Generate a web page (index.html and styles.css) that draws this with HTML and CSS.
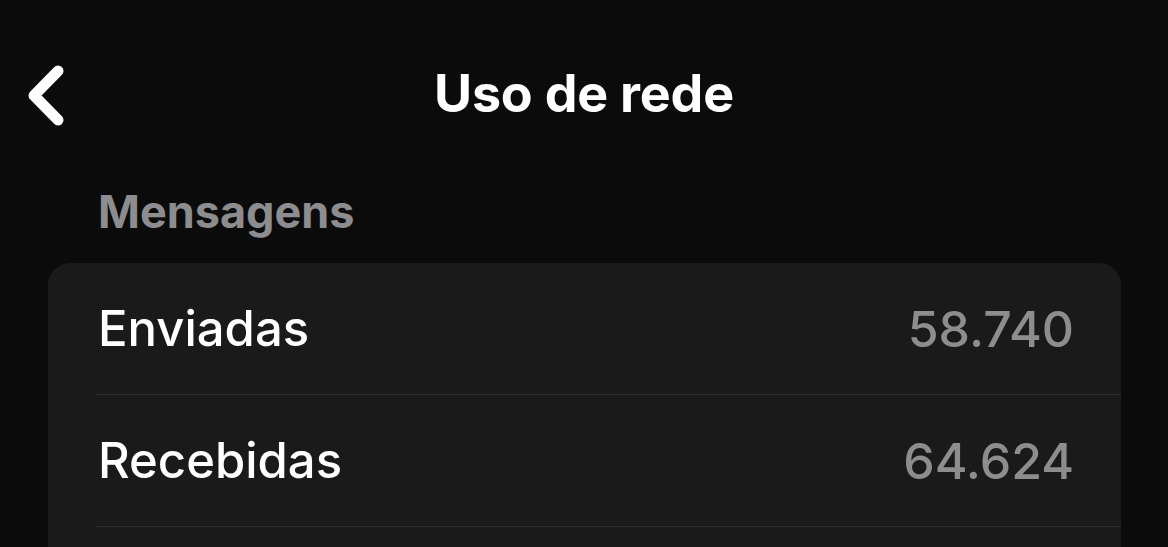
FILE: index.html
```html
<!DOCTYPE html>
<html lang="pt">
<head>
<meta charset="utf-8">
<title>Uso de rede</title>
<link rel="stylesheet" href="styles.css">
</head>
<body>
<div class="screen">
  <header class="nav">
    <div class="nav-left">
      <svg class="back" width="40" height="64" viewBox="0 0 40 64" aria-label="Voltar">
        <polyline points="31,7 7,31.5 31,56" fill="none" stroke="#ffffff" stroke-width="11" stroke-linecap="round" stroke-linejoin="round"/>
      </svg>
    </div>
    <h1 class="title">Uso de rede</h1>
    <div class="nav-right"></div>
  </header>
  <h2 class="section-label">Mensagens</h2>
  <section class="card">
    <div class="row">
      <div class="row-inner">
        <span class="row-label">Enviadas</span>
        <span class="row-value">58.740</span>
      </div>
    </div>
    <div class="row">
      <div class="row-inner">
        <span class="row-label">Recebidas</span>
        <span class="row-value">64.624</span>
      </div>
    </div>
  </section>
</div>
</body>
</html>
```
FILE: styles.css
```css
html, body {
  margin: 0;
  padding: 0;
  background: #0b0b0b;
}
body {
  font-family: Inter, "Noto Sans", "Liberation Sans", sans-serif;
  color: #ffffff;
  overflow: hidden;
  height: 547px;
}
.screen {
  display: flex;
  flex-direction: column;
}
.nav {
  height: 188px;
  display: grid;
  grid-template-columns: 1fr auto 1fr;
  align-items: center;
}
.nav-left {
  padding-left: 27px;
  padding-top: 3px;
  display: flex;
  align-items: center;
}
.back {
  display: block;
}
.title {
  margin: 0;
  font-size: 52px;
  line-height: 52px;
  font-weight: 700;
  letter-spacing: -0.2px;
  color: #ffffff;
}
.section-label {
  margin: 1px 0 29px 98px;
  font-size: 45px;
  line-height: 45px;
  font-weight: 700;
  color: #8d8d8f;
}
.card {
  margin: 0 47px 0 48px;
  padding-bottom: 60px;
  background: #1a1a1a;
  border-radius: 22px;
  display: flex;
  flex-direction: column;
}
.row {
  padding-left: 48px;
}
.row-inner {
  height: 132px;
  box-sizing: border-box;
  border-bottom: 1px solid #2e2e30;
  display: flex;
  align-items: center;
  justify-content: space-between;
  padding: 0 47px 0 2px;
}
.row-label {
  font-size: 49px;
  line-height: 50px;
  font-weight: 500;
  color: #ffffff;
}
.row-value {
  font-size: 50px;
  line-height: 50px;
  font-weight: 500;
  color: #8d8d8f;
}
```
